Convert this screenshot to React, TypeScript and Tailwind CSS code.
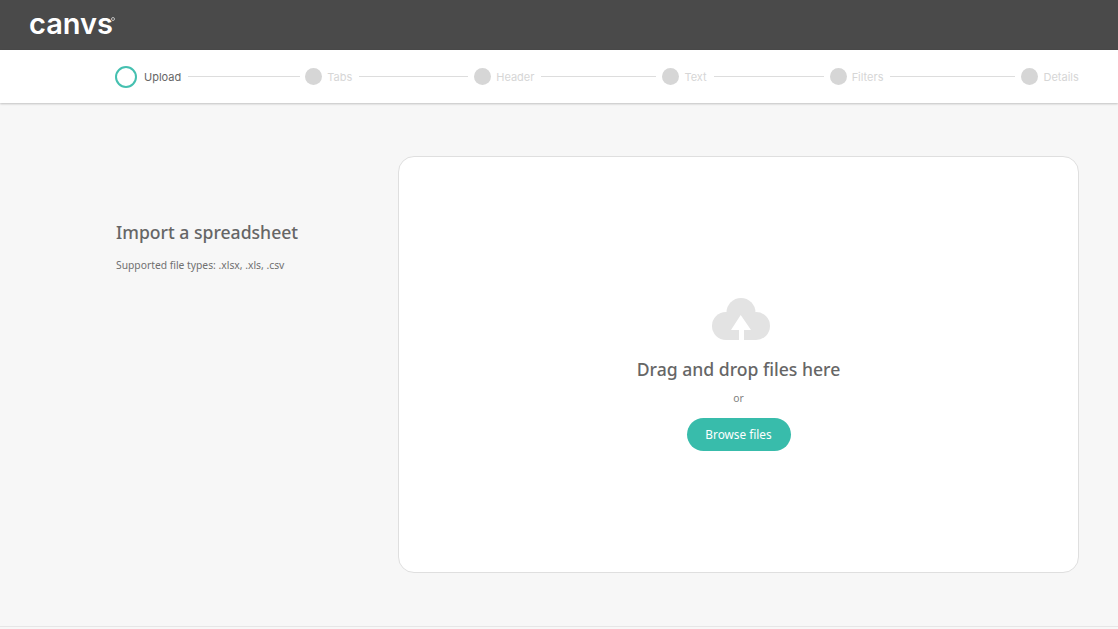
const steps = [
  { label: "Tabs", lineWidth: "w-[109px]" },
  { label: "Header", lineWidth: "w-[115px]" },
  { label: "Text", lineWidth: "w-[110px]" },
  { label: "Filters", lineWidth: "w-[125px]" },
  { label: "Details", lineWidth: "" },
];

function CloudUpload() {
  return (
    <svg width="58" height="42" viewBox="0 0 58 42" className="ml-[5px] block">
      <g fill="#e3e3e3">
        <circle cx="14" cy="28" r="14" />
        <circle cx="44" cy="28" r="14" />
        <circle cx="29" cy="14.500" r="14.500" />
        <rect x="14" y="20" width="30" height="22" />
      </g>
      <path d="M28.700 17 L39 32 H32 V42 H27 V32 H19Z" fill="#ffffff" />
    </svg>
  );
}

export default function App() {
  return (
    <div className="flex h-[629px] w-[1118px] flex-col overflow-hidden bg-[#f7f7f7] font-['Noto_Sans',sans-serif]">
      <header className="flex h-[50px] shrink-0 items-center bg-[#4a4a4a] pb-[4px] pl-[29px]">
        <span className="relative font-['Inter',sans-serif] text-[29px] leading-none font-semibold text-white">
          canvs
          <span className="absolute top-[8px] -right-[2px] h-[4px] w-[4px] rounded-full border-[0.5px] border-[#bdbdbd]" />
        </span>
      </header>

      <nav className="relative flex h-[53px] shrink-0 items-center bg-white pl-[115px] font-['Inter',sans-serif] text-[11px] shadow-[0_1px_2px_rgba(0,0,0,0.22)]">
        <span className="h-[22px] w-[22px] rounded-full border-2 border-[#45c0b0]" />
        <span className="mt-px ml-[7px] text-[#666666]">Upload</span>
        <span className="mr-[5px] ml-[7px] h-px w-[112px] bg-[#dddddd]" />
        {steps.map((step) => (
          <div key={step.label} className="flex items-center">
            <span className="h-[17px] w-[17px] rounded-full bg-[#d6d6d6]" />
            <span className="mt-px ml-[5px] text-[#d6d6d6]">{step.label}</span>
            {step.lineWidth && (
              <span className={`mr-[6px] ml-[7px] h-px bg-[#dddddd] ${step.lineWidth}`} />
            )}
          </div>
        ))}
      </nav>

      <main className="flex flex-1 pt-[53px] pl-[116px]">
        <section className="w-[282px] pt-[63px]">
          <h1 className="text-[17.600px] leading-[26px] font-medium text-[#666666]">
            Import a spreadsheet
          </h1>
          <p className="mt-[13px] text-[10.300px] leading-[14px] text-[#707070]">
            Supported file types: .xlsx, .xls, .csv
          </p>
        </section>

        <section className="flex h-[417px] w-[681px] flex-col items-center rounded-[16px] border border-[#dfdfdf] bg-white pt-[141px]">
          <CloudUpload />
          <h2 className="mt-[16px] text-[17.600px] leading-[26px] font-medium text-[#666666]">
            Drag and drop files here
          </h2>
          <span className="mt-[9px] text-[10.300px] leading-[14px] text-[#808080]">or</span>
          <button className="mt-[13px] h-[33px] w-[104px] rounded-full bg-[#38bcab] pt-px text-[11.800px] text-white">
            Browse files
          </button>
        </section>
      </main>

      <footer className="h-[3px] shrink-0 border-t border-[#e6e6e6]" />
    </div>
  );
}
